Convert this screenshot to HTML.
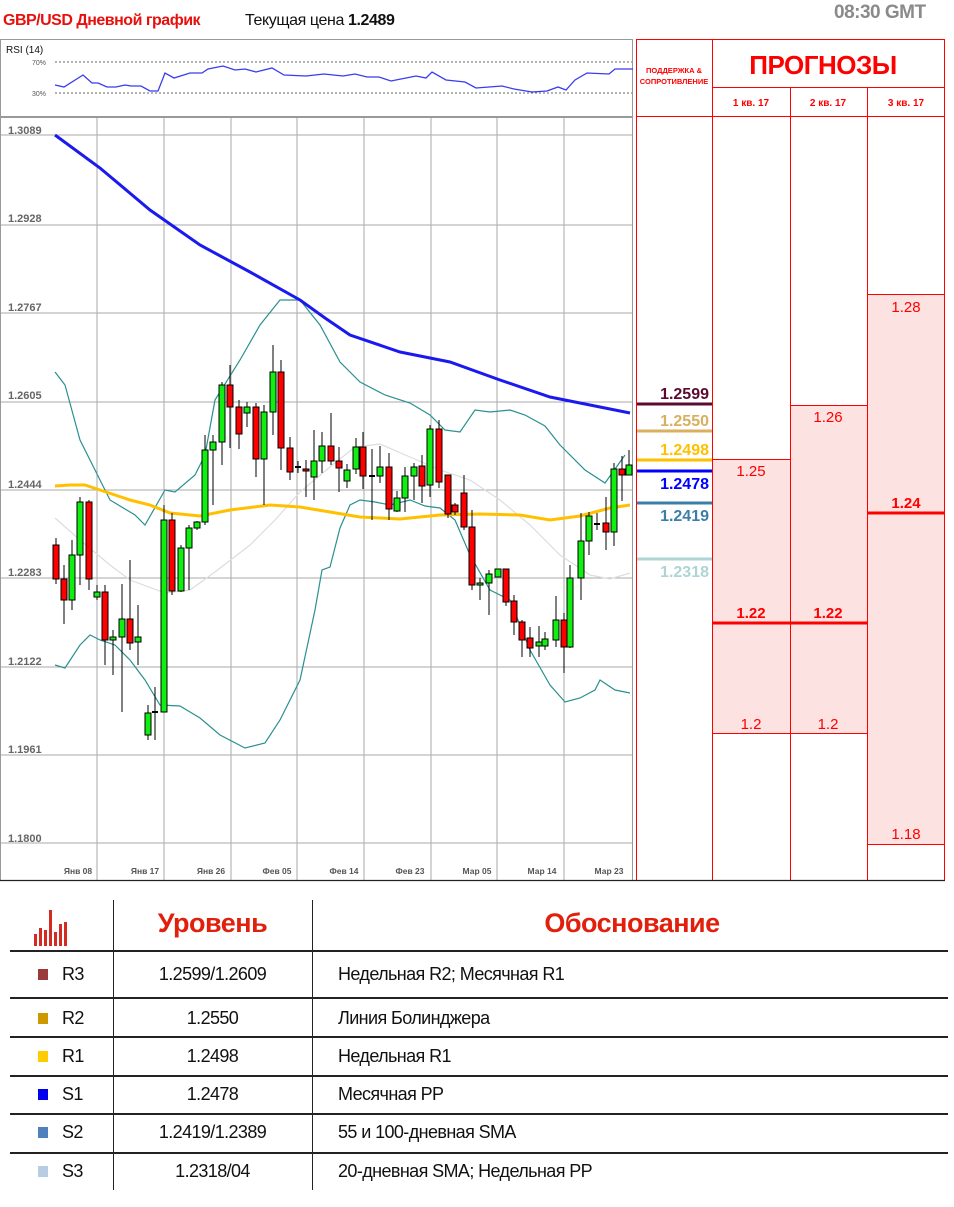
<!DOCTYPE html>
<html><head><meta charset="utf-8"><style>
*{margin:0;padding:0;box-sizing:border-box}
body{width:954px;height:1207px;background:#fff;position:relative;overflow:hidden;font-family:"Liberation Sans","DejaVu Sans",sans-serif}
.a{position:absolute;white-space:nowrap}
.t{position:absolute;white-space:nowrap;font-size:18px;letter-spacing:-0.6px;color:#111}
.hl{position:absolute;height:2px;background:#222;left:10px;width:938px}
.sq{position:absolute;width:10px;height:11px;left:38px}
</style></head><body>
<div class="a" style="left:3px;top:12px;font-size:16px;font-weight:bold;color:#e8100c;letter-spacing:-0.5px">GBP/USD Дневной график</div>
<div class="a" style="left:245px;top:12px;font-size:16px;color:#111;letter-spacing:-0.4px">Текущая цена <b>1.2489</b></div>
<div class="a" style="left:834px;top:2px;font-size:19px;font-weight:bold;color:#8a8a8a;letter-spacing:-0.5px">08:30 GMT</div>

<svg class="a" style="left:0;top:0" width="954" height="885">
<rect x="0.5" y="39.5" width="632" height="77" fill="none" stroke="#999"/>
<text x="6" y="53" font-size="10" font-family="Liberation Sans" fill="#111">RSI (14)</text>
<text x="32" y="65" font-size="7" fill="#555">70%</text><text x="32" y="96" font-size="7" fill="#555">30%</text>
<line x1="55" y1="62" x2="632" y2="62" stroke="#666" stroke-dasharray="2,2"/>
<line x1="55" y1="93" x2="632" y2="93" stroke="#666" stroke-dasharray="2,2"/>
<polyline fill="none" stroke="#3a3af0" stroke-width="1.3" points="55,85 64,87 83,75 92,83 98,83 107,87 116,87 125,85 131,86 141,86 150,91 158,91 165,73 174,78 190,73 202,73 208,69 223,66 235,70 245,69 256,72 272,68 284,75 306,76 324,74 343,76 355,74 367,77 379,77 391,81 416,76 426,78 432,72 446,80 465,82 476,88 489,87 502,86 514,89 532,92 547,91 558,87 566,90 575,80 587,73 609,74 615,69 633,69"/>
<rect x="0.5" y="117.5" width="632" height="763" fill="none" stroke="#999"/>
<g stroke="#aaa" stroke-width="1">
<path d="M1 135H632M1 225H632M1 313H632M1 402H632M1 490H632M1 578H632M1 667H632M1 755H632M1 843H632"/>
<path d="M97 118V880M164 118V880M231 118V880M297 118V880M364 118V880M431 118V880M497 118V880M564 118V880"/>
</g>
<g font-size="11" font-weight="bold" fill="#666">
<text x="8" y="134">1.3089</text><text x="8" y="222">1.2928</text><text x="8" y="311">1.2767</text><text x="8" y="399">1.2605</text><text x="8" y="488">1.2444</text><text x="8" y="576">1.2283</text><text x="8" y="665">1.2122</text><text x="8" y="753">1.1961</text><text x="8" y="842">1.1800</text>
</g>
<g font-size="8.5" font-weight="bold" fill="#555" text-anchor="middle">
<text x="78" y="874">Янв 08</text><text x="145" y="874">Янв 17</text><text x="211" y="874">Янв 26</text><text x="277" y="874">Фев 05</text><text x="344" y="874">Фев 14</text><text x="410" y="874">Фев 23</text><text x="477" y="874">Мар 05</text><text x="542" y="874">Мар 14</text><text x="609" y="874">Мар 23</text>
</g>
<polyline fill="none" stroke="#ddd" stroke-width="1.2" points="55,518 80,540 110,565 130,580 165,593 190,590 215,572 250,545 275,520 300,492 330,467 355,447 380,444 410,457 440,470 470,480 500,500 530,525 560,555 590,575 610,579 630,573"/>
<polyline fill="none" stroke="#2a9090" stroke-width="1.2" points="55,372 65,385 80,440 95,470 110,500 135,515 145,525 165,490 175,492 195,475 205,455 215,400 240,360 260,325 280,300 300,300 320,325 340,362 360,382 385,395 410,403 430,415 445,430 460,432 475,410 490,412 510,410 525,415 545,426 560,445 585,470 605,483 625,455"/>
<polyline fill="none" stroke="#2a9090" stroke-width="1.2" points="55,665 65,668 80,645 90,635 100,640 115,645 130,660 145,680 160,705 180,706 200,718 220,735 245,748 265,743 280,720 300,680 315,610 322,570 330,567 340,528 350,505 360,500 375,502 390,505 410,500 425,506 440,508 455,520 470,555 490,590 510,600 530,650 550,685 565,702 580,698 595,690 600,680 615,690 630,693"/>
<polyline fill="none" stroke="#ffc000" stroke-width="3" points="55,486 70,485 85,485 100,490 130,500 150,505 170,513 200,516 230,510 270,505 300,507 330,512 360,517 400,519 440,515 480,514 520,515 550,520 580,516 610,508 630,505"/>
<polyline fill="none" stroke="#1a1aee" stroke-width="3" points="55,135 100,168 150,210 200,245 250,272 300,300 325,318 350,335 400,352 450,362 500,380 550,397 600,407 630,413"/>
<path stroke="#000" stroke-width="1" d="M56 538V584M64 565V624M72 540V610M80 497V585M89 500V590M97 585V600M105 585V665M113 630V675M122 584V712M130 560V650M138 605V665M148 705V740M155 687V740M164 505V712M172 513V595M181 545V592M189 525V590M197 521V530M205 435V525M213 435V505M222 382V465M230 365V448M239 400V449M247 402V427M256 403V477M264 405V505M273 345V435M281 360V470M290 437V480M298 461V473M306 460V497M314 430V500M322 432V473M331 413V465M339 447V492M347 464V488M356 438V474M363 432V489M372 449V520M380 446V483M389 453V520M397 491V512M405 467V512M414 463V500M422 455V503M430 425V497M439 420V488M448 475V518M455 503V515M464 475V530M472 510V590M480 578V600M489 570V615M498 569V577M506 569V606M514 595V635M522 620V657M530 627V657M539 626V657M545 632V650M556 596V647M564 613V673M570 565V648M581 513V600M589 512V555M597 513V530M606 497V550M614 463V546M622 456V501M629 450V475"/>
<g stroke="#000" stroke-width="1" fill="#ff0000">
<rect x="53" y="545" width="6" height="34"/><rect x="61" y="579" width="6" height="21"/><rect x="86" y="502" width="6" height="77"/><rect x="102" y="592" width="6" height="48"/><rect x="127" y="619" width="6" height="24"/><rect x="169" y="520" width="6" height="71"/><rect x="227" y="385" width="6" height="22"/><rect x="236" y="407" width="6" height="27"/><rect x="253" y="407" width="6" height="52"/><rect x="278" y="372" width="6" height="76"/><rect x="287" y="448" width="6" height="24"/><rect x="303" y="469" width="6" height="2"/><rect x="328" y="446" width="6" height="15"/><rect x="336" y="461" width="6" height="7"/><rect x="360" y="447" width="6" height="29"/><rect x="386" y="467" width="6" height="42"/><rect x="419" y="466" width="6" height="20"/><rect x="436" y="429" width="6" height="53"/><rect x="445" y="475" width="6" height="39"/><rect x="452" y="505" width="6" height="7"/><rect x="461" y="493" width="6" height="34"/><rect x="469" y="527" width="6" height="58"/><rect x="503" y="569" width="6" height="33"/><rect x="511" y="601" width="6" height="21"/><rect x="519" y="622" width="6" height="18"/><rect x="527" y="638" width="6" height="10"/><rect x="561" y="620" width="6" height="27"/><rect x="603" y="523" width="6" height="9"/><rect x="619" y="469" width="6" height="6"/>
</g>
<g stroke="#000" stroke-width="1" fill="#11ee11">
<rect x="69" y="555" width="6" height="45"/><rect x="77" y="502" width="6" height="53"/><rect x="94" y="592" width="6" height="5"/><rect x="110" y="637" width="6" height="3"/><rect x="119" y="619" width="6" height="18"/><rect x="135" y="637" width="6" height="5"/><rect x="145" y="713" width="6" height="22"/><rect x="161" y="520" width="6" height="192"/><rect x="178" y="548" width="6" height="43"/><rect x="186" y="528" width="6" height="20"/><rect x="194" y="522" width="6" height="6"/><rect x="202" y="450" width="6" height="72"/><rect x="210" y="442" width="6" height="8"/><rect x="219" y="385" width="6" height="57"/><rect x="244" y="407" width="6" height="6"/><rect x="261" y="412" width="6" height="47"/><rect x="270" y="372" width="6" height="40"/><rect x="311" y="461" width="6" height="16"/><rect x="319" y="446" width="6" height="15"/><rect x="344" y="470" width="6" height="11"/><rect x="353" y="447" width="6" height="22"/><rect x="377" y="467" width="6" height="9"/><rect x="394" y="498" width="6" height="13"/><rect x="402" y="476" width="6" height="22"/><rect x="411" y="467" width="6" height="9"/><rect x="427" y="429" width="6" height="56"/><rect x="477" y="583" width="6" height="2"/><rect x="486" y="574" width="6" height="9"/><rect x="495" y="569" width="6" height="8"/><rect x="536" y="642" width="6" height="4"/><rect x="542" y="639" width="6" height="7"/><rect x="553" y="620" width="6" height="20"/><rect x="567" y="578" width="6" height="69"/><rect x="578" y="541" width="6" height="37"/><rect x="586" y="516" width="6" height="25"/><rect x="611" y="469" width="6" height="63"/><rect x="626" y="465" width="6" height="10"/>
</g>
<path stroke="#000" stroke-width="2" d="M152 712H158M295 467H301M369 476H375M594 524H600"/>

<!-- right panel -->
<rect x="713" y="459" width="77" height="274" fill="#fde2e2"/>
<rect x="790" y="405" width="77" height="328" fill="#fde2e2"/>
<rect x="867" y="294" width="78" height="550" fill="#fde2e2"/>
<g stroke="#ff0000" stroke-width="1">
<path d="M636.5 39V880M712.5 39V880M944.5 39V880M636 39.5H945M713 87.5H945M636 116.5H945M790.5 87V880M867.5 87V880M713 459.5H790M713 733.5H867M790 405.5H867M867 294.5H945M867 844.5H945"/>
</g>
<path stroke="#ff0000" stroke-width="3" d="M713 623H867M867 513H945"/>
<line x1="0" y1="880.5" x2="945" y2="880.5" stroke="#222" stroke-width="1.2"/>
<g font-weight="bold" fill="#ff0000" text-anchor="middle">
<text x="674" y="73" font-size="7.5">ПОДДЕРЖКА &amp;</text><text x="674" y="84" font-size="7.5">СОПРОТИВЛЕНИЕ</text>
<text x="823" y="74" font-size="26" letter-spacing="-0.5">ПРОГНОЗЫ</text>
<text x="751" y="106" font-size="10">1 кв. 17</text><text x="828" y="106" font-size="10">2 кв. 17</text><text x="906" y="106" font-size="10">3 кв. 17</text>
<text x="751" y="618" font-size="15">1.22</text><text x="828" y="618" font-size="15">1.22</text><text x="906" y="508" font-size="15">1.24</text>
</g>
<g fill="#ff0000" text-anchor="middle" font-size="15">
<text x="751" y="476">1.25</text><text x="828" y="422">1.26</text><text x="906" y="312">1.28</text>
<text x="751" y="729">1.2</text><text x="828" y="729">1.2</text><text x="906" y="839">1.18</text>
</g>
<g stroke-width="3">
<line x1="637" y1="404" x2="712" y2="404" stroke="#5c0a30"/>
<line x1="637" y1="431" x2="712" y2="431" stroke="#d9b060"/>
<line x1="637" y1="460" x2="712" y2="460" stroke="#ffc000"/>
<line x1="637" y1="471" x2="712" y2="471" stroke="#0000ff"/>
<line x1="637" y1="503" x2="712" y2="503" stroke="#3b7fa8"/>
<line x1="637" y1="559" x2="712" y2="559" stroke="#add5d5"/>
</g>
<g font-weight="bold" font-size="16" text-anchor="end">
<text x="709" y="399" fill="#5c0a30">1.2599</text>
<text x="709" y="426" fill="#d9b060">1.2550</text>
<text x="709" y="455" fill="#ffc000">1.2498</text>
<text x="709" y="489" fill="#0000ff">1.2478</text>
<text x="709" y="521" fill="#3b7fa8">1.2419</text>
<text x="709" y="577" fill="#add5d5">1.2318</text>
</g>
</svg>

<!-- bottom table -->
<svg class="a" style="left:33px;top:908px" width="40" height="40">
<g fill="#d42a20"><rect x="1" y="26" width="3" height="12"/><rect x="6" y="20" width="3" height="18"/><rect x="11" y="22" width="3" height="16"/><rect x="16" y="2" width="3" height="36"/><rect x="21" y="24" width="3" height="14"/><rect x="26" y="16" width="3" height="22"/><rect x="31" y="14" width="3" height="24"/></g>
</svg>
<div class="a" style="left:113px;top:900px;width:1px;height:290px;background:#222"></div>
<div class="a" style="left:312px;top:900px;width:1px;height:290px;background:#222"></div>
<div class="a" style="left:113px;top:908px;width:199px;text-align:center;font-size:27px;font-weight:bold;color:#e0200c;letter-spacing:-0.5px">Уровень</div>
<div class="a" style="left:312px;top:908px;width:640px;text-align:center;font-size:27px;font-weight:bold;color:#e0200c;letter-spacing:-0.5px">Обоснование</div>
<div class="hl" style="top:950px"></div>
<div class="hl" style="top:997px"></div>
<div class="hl" style="top:1036px"></div>
<div class="hl" style="top:1075px"></div>
<div class="hl" style="top:1113px"></div>
<div class="hl" style="top:1152px"></div>

<div class="sq" style="top:969px;background:#9b3a3a"></div><div class="t" style="left:62px;top:964px">R3</div>
<div class="t" style="left:113px;width:199px;text-align:center;top:964px">1.2599/1.2609</div>
<div class="t" style="left:338px;top:964px">Недельная R2; Месячная R1</div>

<div class="sq" style="top:1013px;background:#cc9900"></div><div class="t" style="left:62px;top:1008px">R2</div>
<div class="t" style="left:113px;width:199px;text-align:center;top:1008px">1.2550</div>
<div class="t" style="left:338px;top:1008px">Линия Болинджера</div>

<div class="sq" style="top:1051px;background:#ffcc00"></div><div class="t" style="left:62px;top:1046px">R1</div>
<div class="t" style="left:113px;width:199px;text-align:center;top:1046px">1.2498</div>
<div class="t" style="left:338px;top:1046px">Недельная R1</div>

<div class="sq" style="top:1089px;background:#0000ee"></div><div class="t" style="left:62px;top:1084px">S1</div>
<div class="t" style="left:113px;width:199px;text-align:center;top:1084px">1.2478</div>
<div class="t" style="left:338px;top:1084px">Месячная PP</div>

<div class="sq" style="top:1127px;background:#4f81bd"></div><div class="t" style="left:62px;top:1122px">S2</div>
<div class="t" style="left:113px;width:199px;text-align:center;top:1122px">1.2419/1.2389</div>
<div class="t" style="left:338px;top:1122px">55 и 100-дневная SMA</div>

<div class="sq" style="top:1166px;background:#b8cce4"></div><div class="t" style="left:62px;top:1161px">S3</div>
<div class="t" style="left:113px;width:199px;text-align:center;top:1161px">1.2318/04</div>
<div class="t" style="left:338px;top:1161px">20-дневная SMA; Недельная PP</div>
</body></html>
